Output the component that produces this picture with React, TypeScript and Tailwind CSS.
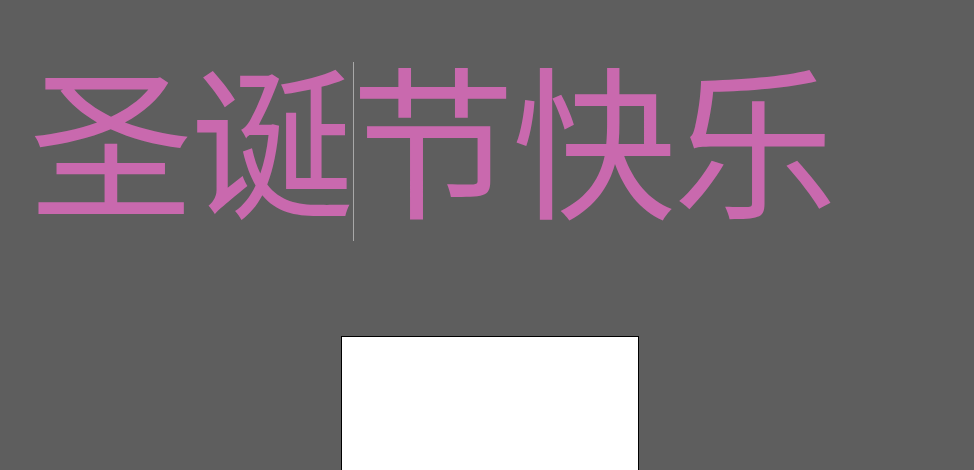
import React from 'react';

export default function App() {
  return (
    <div className="min-h-[470px] w-full overflow-hidden bg-[#5e5e5e]">
      <div
        className="flex items-start pl-[29px] pt-[45px] text-[164px] leading-[179px] tracking-[-3px] text-[#c969ae]"
        style={{ fontFamily: '"Noto Sans CJK SC", "Noto Sans", sans-serif' }}
      >
        <span>圣诞</span>
        <span className="ml-[2px] -mr-[3px] mt-[17px] inline-block h-[179px] w-px bg-[#a8a8a8]" />
        <span>节快乐</span>
      </div>
      <div className="ml-[341px] mt-[95px] h-[150px] w-[298px] border border-black bg-white" />
    </div>
  );
}
